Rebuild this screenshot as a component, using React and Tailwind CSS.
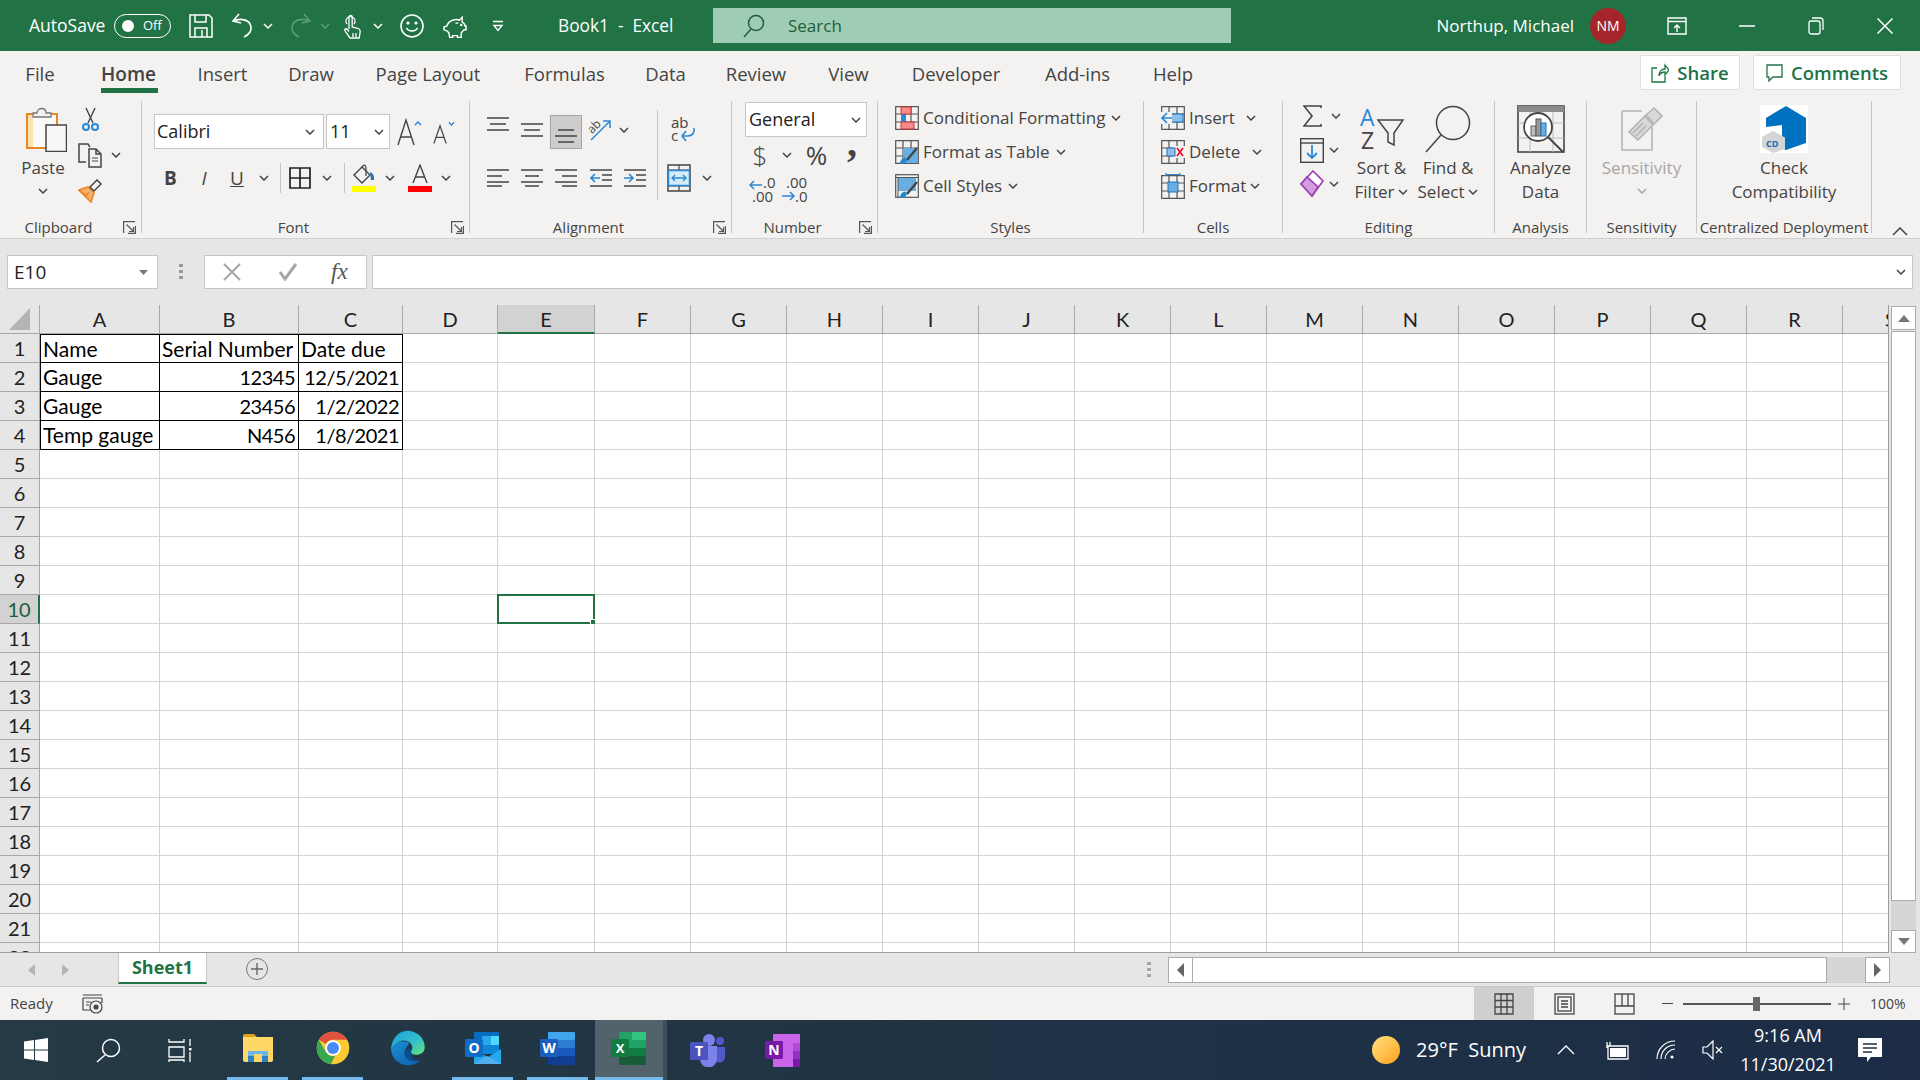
import React from 'react';

const Chev = ({ c = '#444' }) => (
  <svg width="10" height="6" viewBox="0 0 10 6" fill="none" stroke={c} strokeWidth="1.5"><path d="M1 1l4 4 4-4" /></svg>
);

const S = ({ c, children }) => <div className={`flex shrink-0 items-center justify-center ${c}`}>{children}</div>;

const Launcher = () => (
  <svg width="13" height="13" viewBox="0 0 13 13" fill="none" stroke="#555" strokeWidth="1.2"><path d="M.6 12V.6H12M3.5 3.5l7 7M10.5 6v4.5H6M12.4 5v7.4H5" /></svg>
);

const Group = ({ w, label, launcher, children }) => (
  <div className={`flex h-[132px] shrink-0 flex-col border-r border-[#c8c6c4] ${w}`}>
    <div className="h-[117px]">{children}</div>
    <div className="flex h-[15px] items-start">
      <div className="flex-1 text-center text-[15px] leading-[18px] text-[#444]">{label}</div>
      {launcher && <div className="flex h-[18px] w-[24px] items-center justify-center"><Launcher /></div>}
    </div>
  </div>
);

/* title bar icons */
const SaveIcon = () => (
  <svg width="24" height="24" viewBox="0 0 24 24" fill="none" stroke="#fff" strokeWidth="1.5"><path d="M1 1h19l3 3v19H1zM6 1v7h11V1M6 23v-9h12v9M13 16v7" /></svg>
);
const UndoIcon = ({ c = '#fff' }) => (
  <svg width="24" height="25" viewBox="0 0 24 25" fill="none" stroke={c} strokeWidth="1.6"><path d="M8 1L2 8l8 2M2 8c7-3 17-2 18 6 .6 5-3 8-7 10" /></svg>
);
const TouchIcon = () => (
  <svg width="20" height="28" viewBox="0 0 20 28" fill="none" stroke="#fff" strokeWidth="1.3"><path d="M5 12a4.5 4.5 0 1 1 7 0M7 17V5a1.6 1.6 0 0 1 3.2 0v10l6 1.5c1.5.5 2 1.4 2 3l-1 6.5H8l-5-7c-1-2 1-3 2.5-1.5L7 19.5M11 21v4M14 21v4" /></svg>
);
const SmileIcon = () => (
  <svg width="24" height="24" viewBox="0 0 24 24" fill="none" stroke="#fff" strokeWidth="1.6"><circle cx="12" cy="12" r="11" /><path d="M6.5 14c2 4 9 4 11 0" /><circle cx="8" cy="9" r=".8" fill="#fff" /><circle cx="16" cy="9" r=".8" fill="#fff" /></svg>
);
const PigIcon = () => (
  <svg width="25" height="24" viewBox="0 0 25 24" fill="none" stroke="#fff" strokeWidth="1.5"><path d="M1 13l3-1c1-3 3-5 6-6 3-1 5-1 7 0l3-3v5c2 1 3 2 3 4h1v4h-2c-1 1-2 2-3 3v5h-4v-2h-5v2H7l-1-5-2-2-3-1zM13 9h3" /><circle cx="19" cy="11" r=".6" fill="#fff" /></svg>
);
const CustomizeIcon = () => (
  <svg width="12" height="12" viewBox="0 0 12 12" fill="none" stroke="#fff" strokeWidth="1.4"><path d="M1 1.5h10M2 5.5h8l-4 5z" /></svg>
);
const SearchIcon = () => (
  <svg width="22" height="24" viewBox="0 0 22 24" fill="none" stroke="#1f5e3c" strokeWidth="1.5"><circle cx="13" cy="9" r="7.5" /><path d="M8 15L1 23" /></svg>
);
const RedoIcon = () => <div className="-scale-x-100"><UndoIcon c="#5d9a7b" /></div>;

/* clipboard */
const PasteIcon = () => (
  <svg width="41" height="45" viewBox="0 0 41 45">
    <rect x="1" y="7" width="30" height="34" fill="#fde4ae" stroke="#e8862a" strokeWidth="2" />
    <rect x="7" y="8" width="23" height="32" fill="#fafafa" />
    <path d="M7 10V6h4c0-6 9-6 9 0h5v4z" fill="#f3f2f1" stroke="#777" strokeWidth="1.3" />
    <rect x="20" y="18" width="20.5" height="26.5" fill="#f8f8f8" stroke="#444" strokeWidth="1.5" />
  </svg>
);
const ScissorsIcon = () => (
  <svg width="17" height="25" viewBox="0 0 17 25" fill="none"><path d="M4 1l7 15M13 1L6 16" stroke="#444" strokeWidth="1.4" /><circle cx="4" cy="20" r="3" stroke="#2b88d8" strokeWidth="2" /><circle cx="13" cy="20" r="3" stroke="#2b88d8" strokeWidth="2" /></svg>
);
const CopyIcon = () => (
  <svg width="24" height="25" viewBox="0 0 24 25" fill="none" stroke="#444" strokeWidth="1.5"><path d="M8 19H1V1h9l2 3" /><path d="M11 6h7l5 5v13H11zM18 6v5h5" fill="#f3f2f1" /><path d="M14 15h6M14 18h6" strokeWidth="1.2" /></svg>
);
const BrushIcon = () => (
  <svg width="24" height="24" viewBox="0 0 24 24" fill="none"><path d="M1 11l9-3 6 6-3 9z" fill="#f6b26b" stroke="#e8862a" strokeWidth="1.6" /><path d="M7 18l4-5M1 11l8 6" stroke="#e8862a" strokeWidth="1.4" /><path d="M12 8l7-7 4 4-7 7z" fill="#f3f2f1" stroke="#444" strokeWidth="1.5" /></svg>
);

/* font */
const Grow = ({ up }) => (
  <svg width="25" height="28" viewBox="0 0 25 28" fill="none" stroke="#444" strokeWidth="1.4"><path d={up ? 'M1 27L9 2l8 25M4 19h10' : 'M1 27L8 7l7 20M3.5 20h9'} /><path d={up ? 'M18 7l3-3 3 3' : 'M18 3l3 3 3-3'} stroke="#2b88d8" strokeWidth="1.5" /></svg>
);
const BordersIcon = () => (
  <svg width="22" height="22" viewBox="0 0 22 22" fill="none" stroke="#222" strokeWidth="1.7"><path d="M1 1h20v20H1zM11 1v20M1 11h20" /></svg>
);
const FillIcon = () => (
  <svg width="24" height="28" viewBox="0 0 24 28"><path d="M10 3L2 11l8 8 8-8z" fill="none" stroke="#444" strokeWidth="1.4" /><path d="M10 3c2-3 4-2 4 1v8" fill="none" stroke="#444" strokeWidth="1.2" /><path d="M18 8c3 1 4 3 4 8h-3z" fill="#2072b8" /><rect y="22" width="24" height="6" fill="#ffff00" /></svg>
);
const FontColor = () => (
  <svg width="24" height="28" viewBox="0 0 24 28" fill="none"><path d="M5 19L12 1l7 18M7.5 13h9" stroke="#444" strokeWidth="1.4" /><rect y="22" width="24" height="6" fill="#ff0000" /></svg>
);

/* alignment */
const Lines = ({ d }) => (
  <svg width="22" height="18" viewBox="0 0 22 18" fill="none" stroke="#444" strokeWidth="1.6"><path d={d} /></svg>
);
const OrientIcon = () => (
  <svg className="overflow-visible" width="24" height="24" viewBox="0 0 24 24" fill="none"><path d="M3 23L22 4M15 4h7v7" stroke="#2b88d8" strokeWidth="1.5" /><text x="0" y="14" transform="rotate(-45 6 11)" fontSize="12" fill="#444" fontFamily="Open Sans">ab</text></svg>
);
const WrapIcon = () => (
  <svg className="overflow-visible" width="26" height="30" viewBox="0 0 26 30" fill="none"><text x="2" y="13" fontSize="15" fill="#444" fontFamily="Open Sans">ab</text><text x="2" y="26" fontSize="15" fill="#444" fontFamily="Open Sans">c</text><path d="M25 13c1 5-2 8-6 8h-6M17 16l-4 5 4 5" stroke="#2b88d8" strokeWidth="1.6" /></svg>
);
const Indent = ({ out }) => (
  <svg width="22" height="18" viewBox="0 0 22 18" fill="none"><path d="M0 1h22M12 6h10M12 11h10M0 17h22" stroke="#444" strokeWidth="1.6" /><path d={out ? 'M10 9H1M5 5L1 9l4 4' : 'M0 9h9M5 5l4 4-4 4'} stroke="#2b88d8" strokeWidth="1.6" /></svg>
);
const MergeIcon = () => (
  <svg width="24" height="28" viewBox="0 0 24 28" fill="none"><rect x="1" y="1" width="22" height="26" stroke="#444" strokeWidth="1.5" /><path d="M1 6h22M1 22h22M12 22v5M12 1v5" stroke="#444" strokeWidth="1.2" /><rect x="1.5" y="6.5" width="21" height="15" fill="#d6ebf8" stroke="#2b88d8" strokeWidth="1.5" /><path d="M5 14h14M8 11l-3 3 3 3M16 11l3 3-3 3" stroke="#2b88d8" strokeWidth="1.4" /></svg>
);

/* number */
const DecIcon = ({ more }) => (
  <svg className="overflow-visible" width="25" height="26" viewBox="0 0 25 26" fill="none">
    {more ? (
      <>
        <text x="4" y="11" fontSize="15" fill="#444" fontFamily="Open Sans">.00</text>
        <text x="13" y="25" fontSize="15" fill="#444" fontFamily="Open Sans">.0</text>
        <path d="M0 19h12M8 15l4 4-4 4" stroke="#2b88d8" strokeWidth="1.5" />
      </>
    ) : (
      <>
        <text x="14" y="11" fontSize="15" fill="#444" fontFamily="Open Sans">.0</text>
        <text x="3" y="25" fontSize="15" fill="#444" fontFamily="Open Sans">.00</text>
        <path d="M13 8H1M5 4L1 8l4 4" stroke="#2b88d8" strokeWidth="1.5" />
      </>
    )}
  </svg>
);

/* styles + cells */
const TableLines = () => <path d="M.7.7h22.6v22.6H.7zM8 .7v22.6M16 .7v22.6M.7 8h22.6M.7 16h22.6" fill="none" stroke="#555" strokeWidth="1.2" />;
const CondIcon = () => (
  <svg width="24" height="24" viewBox="0 0 24 24"><TableLines /><rect x="6" y="8" width="5" height="8" fill="#2b88d8" /><rect x="6" y="1" width="10" height="7" fill="#f98b8b" stroke="#d13438" /><rect x="6" y="16" width="13" height="7" fill="#f98b8b" stroke="#d13438" /></svg>
);
const Paintbrush = () => (
  <g><path d="M12 20L22 8" stroke="#444" strokeWidth="2.4" /><path d="M5 24c0-4 3-7 6-6 2 2 0 6-6 6z" fill="#1e88d0" /></g>
);
const TableFmtIcon = () => (
  <svg width="24" height="24" viewBox="0 0 24 24"><TableLines /><rect x="8" y="8" width="15" height="15" fill="#69aee3" /><Paintbrush /></svg>
);
const CellStyleIcon = () => (
  <svg width="24" height="24" viewBox="0 0 24 24"><rect x=".7" y=".7" width="22.6" height="22.6" fill="none" stroke="#555" strokeWidth="1.2" /><rect x="3" y="4" width="18" height="13" fill="#69aee3" /><path d="M.7 3.5h22.6M3 3.5v20" stroke="#555" /><Paintbrush /></svg>
);
const InsertIcon = () => (
  <svg width="24" height="24" viewBox="0 0 24 24"><TableLines /><rect x="10" y="8" width="12" height="8" fill="#8cc0ea" stroke="#2072b8" /><rect x="0" y="6" width="11" height="12" fill="#f3f2f1" /><path d="M11 12H1M6 7l-5 5 5 5" fill="none" stroke="#2b88d8" strokeWidth="1.7" /></svg>
);
const DeleteIcon = () => (
  <svg width="24" height="24" viewBox="0 0 24 24"><TableLines /><rect x="12" y="6" width="12" height="12" fill="#f3f2f1" /><rect x="6" y="8" width="8" height="8" fill="#8cc0ea" stroke="#2072b8" /><path d="M16 8l6 8M22 8l-6 8" stroke="#e81123" strokeWidth="1.7" /></svg>
);
const FormatIcon = () => (
  <svg width="24" height="26" viewBox="0 0 24 26"><g transform="translate(0 2)"><TableLines /><rect x="7" y="7" width="10" height="10" fill="#69aee3" stroke="#2072b8" /></g><path d="M5 1.5h14M5 0v3M19 0v3" stroke="#2b88d8" strokeWidth="1.2" fill="none" /></svg>
);

/* editing */
const SigmaIcon = () => (
  <svg width="19" height="22" viewBox="0 0 19 22" fill="none" stroke="#444" strokeWidth="1.6"><path d="M18 3V1H1l8 10-8 10h17v-2" /></svg>
);
const FillDownIcon = () => (
  <svg width="24" height="25" viewBox="0 0 24 25" fill="none"><rect x=".7" y=".7" width="22.6" height="23.6" stroke="#444" strokeWidth="1.4" /><path d="M.7 5h22.6" stroke="#444" strokeWidth="1.4" /><path d="M12 7v13M7 15l5 5 5-5" stroke="#2b88d8" strokeWidth="1.8" /></svg>
);
const EraserIcon = () => (
  <svg width="24" height="28" viewBox="0 0 24 28"><path d="M1 14L13 1l10 10-11 15z" fill="#fff" stroke="#9c3db0" strokeWidth="1.6" /><path d="M1 14l6-7 11 10-6 9z" fill="#d59be0" stroke="#9c3db0" strokeWidth="1.6" /></svg>
);
const SortIcon = () => (
  <svg className="overflow-visible" width="44" height="42" viewBox="0 0 44 42" fill="none"><text x="0" y="18" fontSize="23" fill="#2b88d8" fontFamily="Open Sans">A</text><text x="1" y="41" fontSize="23" fill="#444" fontFamily="Open Sans">Z</text><path d="M18 12h25l-9 13v12l-6-3V25z" stroke="#444" strokeWidth="1.5" /></svg>
);
const FindIcon = () => (
  <svg width="46" height="48" viewBox="0 0 46 48" fill="none" stroke="#444" strokeWidth="1.5"><circle cx="28" cy="18" r="16.5" /><path d="M16 30L1 47" /></svg>
);
const AnalyzeIcon = () => (
  <svg width="48" height="48" viewBox="0 0 48 48" fill="none"><rect x="1" y="1" width="46" height="46" fill="#f3f2f1" stroke="#444" strokeWidth="1.6" /><rect x="1" y="1" width="46" height="6" fill="#8a8a8a" /><path d="M1 18h46M1 33h46M13 7v40M36 7v40" stroke="#bbb" /><circle cx="21" cy="22" r="14" fill="#fff" stroke="#444" strokeWidth="1.8" /><path d="M31 32l15 15" stroke="#444" strokeWidth="2" /><rect x="14" y="21" width="5" height="10" fill="#bbb" stroke="#666" /><rect x="19" y="14" width="5" height="17" fill="#999" stroke="#555" /><rect x="24" y="18" width="5" height="13" fill="#69aee3" stroke="#2072b8" /></svg>
);
const SensitivityIcon = () => (
  <svg width="42" height="44" viewBox="0 0 42 44" fill="none" stroke="#b5b5b5" strokeWidth="1.6"><path d="M1 4h20M1 4v39h30V20" /><path d="M25 8l8-7 8 8-8 8z" fill="#d8d8d8" /><path d="M8 25L24 9l8 9-15 15z" fill="#d8d8d8" /><path d="M12 26l10-10M15 29l10-10" /></svg>
);
const CompatIcon = () => (
  <svg width="48" height="48" viewBox="0 0 48 48"><rect width="48" height="48" fill="#fff" /><path d="M26 1l20 12v25l-20 7-4-2V20L6 22v-9z" fill="#0070c0" /><path d="M13 26l12 6.5V44L13 48 2 42V32z" fill="#d4d4d4" /><text x="6" y="42" fontSize="9" fontWeight="700" fill="#0f6cbd" fontFamily="Open Sans">CD</text></svg>
);

/* taskbar */
const WinIcon = () => (
  <svg width="24" height="24" viewBox="0 0 24 24" fill="#fff"><path d="M0 3.5l10-1.4v9.4H0zM11 2l13-2v11.5H11zM0 12.5h10v9.400L0 20.500zM11 12.500h13V24l-13-2z" /></svg>
);
const TaskSearch = () => (
  <svg width="25" height="25" viewBox="0 0 25 25" fill="none" stroke="#fff" strokeWidth="1.5"><circle cx="15" cy="10" r="8.5" /><path d="M9 17l-8 7" /></svg>
);
const TaskView = () => (
  <svg width="24" height="24" viewBox="0 0 24 24" fill="none" stroke="#fff" strokeWidth="1.3"><path d="M1 1v3h15V1M1 9h15v10H1zM1 24v-2h15v2M22 1v7M22 14v10" /><rect x="21" y="10" width="2.5" height="2.5" fill="#fff" stroke="none" /></svg>
);
const Explorer = () => (
  <svg width="32" height="30" viewBox="0 0 32 30"><path d="M1 3a2 2 0 0 1 2-2h9l3 3H1z" fill="#e0a21b" /><path d="M1 4h30v23a2 2 0 0 1-2 2H3a2 2 0 0 1-2-2z" fill="#ffd766" /><rect x="6" y="18" width="20" height="5" fill="#6cb6ea" /><rect x="6" y="23" width="6" height="6" fill="#2f81c6" /><rect x="20" y="23" width="6" height="6" fill="#2f81c6" /><rect x="12" y="21" width="8" height="8" fill="#ffd766" /></svg>
);
const Chrome = () => (
  <svg width="34" height="34" viewBox="0 0 48 48"><circle cx="24" cy="24" r="23" fill="#fcc934" /><path d="M24 1a23 23 0 0 1 20 11.5H24a11.5 11.5 0 0 0-10 5.800L4 12.500A23 23 0 0 1 24 1z" fill="#e0523f" /><path d="M4 12.500l10 17.300a11.500 11.500 0 0 0 13 5.300L21 46.800A23 23 0 0 1 4 12.500z" fill="#36a852" /><circle cx="24" cy="24" r="11" fill="#fff" /><circle cx="24" cy="24" r="8.500" fill="#4a8af4" /></svg>
);
const Edge = () => (
  <svg width="37" height="36" viewBox="0 0 48 48">
    <defs>
      <linearGradient id="edgeTop" x1="0" y1="0" x2="1" y2="1"><stop offset="0" stopColor="#1a9fe0" /><stop offset=".6" stopColor="#35c1c8" /><stop offset="1" stopColor="#66e86e" /></linearGradient>
      <linearGradient id="edgeLow" x1="0" y1="0" x2="1" y2="1"><stop offset="0" stopColor="#1b8fd6" /><stop offset="1" stopColor="#0c5ea8" /></linearGradient>
    </defs>
    <path d="M2 24C2 37 12 47 25 47c6 0 12-2 16-7-5 2-10 2-14 0-6-3-8-9-6-14 2-5 8-8 3-10C14 13 4 16 2 24z" fill="url(#edgeLow)" />
    <path d="M21 26c-3 7 1 14 6 14 6 2 11 2 14 0-6 1-10-1-11-5 0-3 0-6-2-9z" fill="#0a4d8c" />
    <path d="M24 1C36 1 47 10 47 23c0 7-6 10-11 10-5 0-8-2-7-5 2-3 2-6 0-9-4-6-12-6-18-3-5 3-8 6-9 9C3 13 11 1 24 1z" fill="url(#edgeTop)" />
  </svg>
);
const Outlook = () => (
  <svg width="36" height="33" viewBox="0 0 36 33"><rect x="9" y="0" width="25" height="14" fill="#0a6cc0" /><rect x="17" y="4" width="9" height="9" fill="#28a8ea" /><rect x="26" y="4" width="8" height="9" fill="#50d9ff" /><rect x="9" y="13" width="8" height="9" fill="#0a6cc0" /><rect x="17" y="13" width="17" height="9" fill="#0f86d8" /><path d="M9 18l14 7 13-8v15H9z" fill="#28a8ea" /><path d="M9 32l13-8 14 8z" fill="#50b0f0" /><rect x="0" y="7" width="18" height="18" rx="1" fill="#0f6cc4" /><text x="9" y="21" textAnchor="middle" fontSize="14" fontWeight="700" fill="#fff" fontFamily="Open Sans">O</text></svg>
);
const Word = () => (
  <svg width="36" height="33" viewBox="0 0 36 33"><rect x="8" y="0" width="27" height="8" rx="1" fill="#41a5ee" /><rect x="8" y="8" width="27" height="8" fill="#2b7cd3" /><rect x="8" y="16" width="27" height="8" fill="#185abd" /><rect x="8" y="24" width="27" height="9" rx="1" fill="#103f91" /><rect x="0" y="7" width="18" height="18" rx="1" fill="#1b5ebe" /><text x="9" y="21" textAnchor="middle" fontSize="14" fontWeight="700" fill="#fff" fontFamily="Open Sans">W</text></svg>
);
const Excel = () => (
  <svg width="36" height="33" viewBox="0 0 36 33"><rect x="8" y="0" width="27" height="8" rx="1" fill="#21a366" /><rect x="21" y="0" width="14" height="8" fill="#33c481" /><rect x="8" y="8" width="27" height="8" fill="#21a366" /><rect x="8" y="16" width="27" height="8" fill="#107c41" /><rect x="8" y="24" width="27" height="9" rx="1" fill="#185c37" /><rect x="0" y="7" width="18" height="18" rx="1" fill="#107c41" /><text x="9" y="21" textAnchor="middle" fontSize="13" fontWeight="700" fill="#fff" fontFamily="Open Sans">X</text></svg>
);
const Teams = () => (
  <svg width="36" height="33" viewBox="0 0 36 33"><circle cx="30" cy="7" r="4" fill="#5059c9" /><path d="M24 13h11v10a5 5 0 0 1-11 0z" fill="#5059c9" /><circle cx="19" cy="6" r="6" fill="#7b83eb" /><path d="M10 12h17v13a8.500 8.500 0 0 1-17 0z" fill="#7b83eb" /><rect x="0" y="8" width="18" height="18" rx="1" fill="#4b53bc" /><text x="9" y="22" textAnchor="middle" fontSize="14" fontWeight="700" fill="#fff" fontFamily="Open Sans">T</text></svg>
);
const OneNote = () => (
  <svg width="36" height="33" viewBox="0 0 36 33"><rect x="8" y="0" width="27" height="33" rx="1" fill="#ca64ea" /><rect x="28" y="9" width="7" height="8" fill="#ae4bd5" /><rect x="28" y="17" width="7" height="8" fill="#9332bf" /><rect x="28" y="25" width="7" height="8" fill="#7719aa" /><rect x="0" y="7" width="18" height="18" rx="1" fill="#7719aa" /><text x="9" y="21" textAnchor="middle" fontSize="14" fontWeight="700" fill="#fff" fontFamily="Open Sans">N</text></svg>
);

const tabs = [
  ['File', 'w-[80px]'], ['Home', 'w-[97px]'], ['Insert', 'w-[91px]'], ['Draw', 'w-[86px]'],
  ['Page Layout', 'w-[148px]'], ['Formulas', 'w-[125px]'], ['Data', 'w-[77px]'], ['Review', 'w-[104px]'],
  ['View', 'w-[81px]'], ['Developer', 'w-[134px]'], ['Add-ins', 'w-[109px]'], ['Help', 'w-[82px]'],
];

const columns = ['A', 'B', 'C', 'D', 'E', 'F', 'G', 'H', 'I', 'J', 'K', 'L', 'M', 'N', 'O', 'P', 'Q', 'R', 'S'];
const rows = Array.from({ length: 22 }, (_, i) => i + 1);
const sheet = {
  A1: 'Name', B1: 'Serial Number', C1: 'Date due',
  A2: 'Gauge', B2: '12345', C2: '12/5/2021',
  A3: 'Gauge', B3: '23456', C3: '1/2/2022',
  A4: 'Temp gauge', B4: 'N456', C4: '1/8/2021',
};

const Cell = ({ col, row }) => {
  const inTable = row <= 4 && ['A', 'B', 'C'].includes(col);
  const right = row > 1 && (col === 'B' || col === 'C');
  return (
    <div
      className={`relative flex items-center whitespace-nowrap border-r border-b text-black ${
        inTable ? 'border-black' : 'border-[#d4d4d4]'
      } ${col === 'A' && inTable ? 'border-l' : ''} ${row === 1 && inTable ? 'border-t' : ''} ${
        right ? 'justify-end pr-[3px] text-[20px] tracking-[-0.5px]' : 'pl-[2px] text-[21px]'
      }`}
    >
      {sheet[col + row]}
      {col === 'E' && row === 10 && (
        <div className="absolute -top-px -left-px -right-px -bottom-px border-2 border-[#217346]">
          <div className="absolute -right-[3px] -bottom-[3px] h-[6px] w-[6px] border border-white bg-[#217346]" />
        </div>
      )}
    </div>
  );
};

const Spreadsheet = () => (
  <div className="h-[648px] w-[1889px] overflow-hidden border-r border-b border-[#9d9d9d] bg-white font-['Lato',sans-serif]">
    <div className="grid grid-cols-[40px_120px_139px_104px_95px_97px_repeat(14,96px)] grid-rows-[29px_repeat(22,29px)]">
      <div className="flex items-center justify-center border-r border-b border-[#a8a8a8] bg-[#e6e6e6]">
        <svg width="21" height="22" viewBox="0 0 21 22"><path d="M21 0v22H0z" fill="#b4b4b4" /></svg>
      </div>
      {columns.map((c) => (
        <div
          key={c}
          className={`flex items-center justify-center border-r text-[20px] text-[#222] ${
            c === 'E' ? 'border-b-2 border-r-[#a8a8a8] border-b-[#217346] bg-[#d2d2d2] text-[#1b5e3a]' : 'border-b border-[#a8a8a8] bg-[#e6e6e6]'
          }`}
        >
          {c}
        </div>
      ))}
      {rows.map((r) => (
        <React.Fragment key={r}>
          <div
            className={`flex items-center justify-center border-b text-[20px] ${
              r === 10
                ? 'border-r-2 border-r-[#217346] border-b-[#a8a8a8] bg-[#d2d2d2] text-[#1b5e3a]'
                : 'border-r border-[#a8a8a8] bg-[#e6e6e6] text-[#222]'
            }`}
          >
            {r}
          </div>
          {columns.map((c) => <Cell key={c} col={c} row={r} />)}
        </React.Fragment>
      ))}
    </div>
  </div>
);

const App = () => (
  <div className="flex h-[1080px] w-[1920px] flex-col overflow-hidden bg-[#e6e6e6] font-['Open_Sans',sans-serif] text-[17px]">
    {/* Title bar */}
    <div className="flex h-[51px] shrink-0 items-center bg-[#217346] pl-[29px] pr-[27px] text-white">
      <span className="w-[76px] whitespace-nowrap text-[17.5px]">AutoSave</span>
      <div className="ml-[9px] flex h-[24px] w-[57px] items-center rounded-full border border-white pl-[7px]">
        <div className="h-[12px] w-[12px] rounded-full bg-white" />
        <span className="ml-[9px] text-[13px]">Off</span>
      </div>
      <S c="ml-[15px] w-[30px]"><SaveIcon /></S>
      <S c="ml-[13px] w-[28px]"><UndoIcon /></S>
      <S c="ml-[4px] w-[14px]"><Chev c="#fff" /></S>
      <S c="ml-[14px] w-[22px]"><RedoIcon /></S>
      <S c="ml-[7px] w-[14px]"><Chev c="#5d9a7b" /></S>
      <S c="ml-[10px] w-[20px]"><TouchIcon /></S>
      <S c="ml-[9px] w-[14px]"><Chev c="#fff" /></S>
      <S c="ml-[15px] w-[24px]"><SmileIcon /></S>
      <S c="ml-[19px] w-[24px]"><PigIcon /></S>
      <S c="ml-[24px] w-[14px]"><CustomizeIcon /></S>
      <span className="ml-[53px] w-[155px] whitespace-pre text-[17.3px]">Book1  -  Excel</span>
      <div className="flex h-[35px] w-[518px] items-center bg-[#9fcdb3] pl-[30px] text-[#1f5e3c]">
        <SearchIcon />
        <span className="ml-[23px]">Search</span>
      </div>
      <span className="ml-auto whitespace-nowrap">Northup, Michael</span>
      <div className="ml-[16px] flex h-[36px] w-[36px] items-center justify-center rounded-full bg-[#a4262c] text-[14px]">NM</div>
      <S c="ml-[41px] w-[20px]">
        <svg width="20" height="18" viewBox="0 0 20 18" fill="none" stroke="#fff" strokeWidth="1.4"><path d="M1 1h18v16H1zM1 4.500h18M10 15V8M7 11l3-3 3 3" /></svg>
      </S>
      <S c="ml-[52px] w-[16px]">
        <svg width="16" height="2" viewBox="0 0 16 2" stroke="#fff" strokeWidth="1.5"><path d="M0 1h16" /></svg>
      </S>
      <S c="ml-[53px] w-[16px]">
        <svg width="16" height="18" viewBox="0 0 16 18" fill="none" stroke="#fff" strokeWidth="1.3"><rect x="1" y="4" width="11" height="13" rx="2" /><path d="M4 1h8a3 3 0 0 1 3 3v9" /></svg>
      </S>
      <S c="ml-[53px] w-[16px]">
        <svg width="16" height="16" viewBox="0 0 16 16" stroke="#fff" strokeWidth="1.5"><path d="M.5.5l15 15M15.500.5l-15 15" /></svg>
      </S>
    </div>

    {/* Ribbon tabs */}
    <div className="flex h-[44px] shrink-0 bg-[#f3f2f1] text-[18.5px] text-[#444]">
      {tabs.map(([name, w]) => (
        <div key={name} className={`relative flex shrink-0 items-center justify-center pt-[2px] ${w} ${name === 'Home' ? 'text-[19px] font-semibold' : ''}`}>
          {name}
          {name === 'Home' && <div className="absolute bottom-[2px] left-[21px] h-[5px] w-[57px] bg-[#217346]" />}
        </div>
      ))}
      <div className="ml-auto flex items-start gap-[13px] pr-[19px] pt-[4px] text-[18.5px] font-semibold text-[#217346]">
        <div className="flex h-[35px] w-[100px] items-center justify-center gap-[8px] rounded-[2px] border border-[#e1dfdd] bg-white pt-px">
          <svg width="18" height="20" viewBox="0 0 18 20" fill="none" stroke="#217346" strokeWidth="1.3"><path d="M6 5H1v14h13v-6M8 13c0-5 3-7 6-7V2l4 5-4 5V9c-3 0-5 1-6 4z" /></svg>
          Share
        </div>
        <div className="flex h-[35px] w-[148px] items-center justify-center gap-[8px] rounded-[2px] border border-[#e1dfdd] bg-white pt-px">
          <svg width="17" height="19" viewBox="0 0 17 19" fill="none" stroke="#217346" strokeWidth="1.3"><path d="M1 1h15v12H7l-4 4v-4H1z" /></svg>
          Comments
        </div>
      </div>
    </div>

    {/* Ribbon */}
    <div className="flex h-[144px] shrink-0 border-b border-[#d2d0ce] bg-[#f3f2f1] pt-[6px] text-[#444]">
      <Group w="w-[142px]" label="Clipboard" launcher>
        <div className="flex">
          <div className="flex w-[78px] flex-col items-center pl-[8px] pt-[6px]">
            <div className="ml-[7px]"><PasteIcon /></div>
            <span className="mt-[4px] leading-[24px]">Paste</span>
            <div className="mt-[8px]"><Chev /></div>
          </div>
          <div className="flex flex-col">
            <S c="h-[36px] w-[24px]"><ScissorsIcon /></S>
            <div className="flex h-[36px] items-center">
              <S c="w-[24px]"><CopyIcon /></S>
              <div className="ml-[9px]"><Chev /></div>
            </div>
            <S c="h-[36px] w-[24px]"><BrushIcon /></S>
          </div>
        </div>
      </Group>

      <Group w="w-[328px]" label="Font" launcher>
        <div className="pl-[12px] pt-[13px]">
          <div className="flex items-center">
            <div className="flex h-[35px] w-[170px] items-center justify-between border border-[#c8c6c4] bg-white pl-[2px] pr-[8px] text-[18px] text-[#222]">Calibri<Chev /></div>
            <div className="ml-[2px] flex h-[35px] w-[64px] items-center justify-between border border-[#c8c6c4] bg-white pl-[3px] pr-[5px] text-[18px] text-[#222]">11<Chev /></div>
            <S c="ml-[7px] w-[25px]"><Grow up /></S>
            <S c="ml-[11px] w-[22px]"><Grow /></S>
          </div>
          <div className="mt-[12px] flex h-[34px] items-center">
            <S c="w-[33px] text-[19px] font-bold">B</S>
            <S c="w-[34px] text-[19px] italic">I</S>
            <S c="w-[32px] text-[19px] underline">U</S>
            <S c="w-[22px]"><Chev /></S>
            <div className="ml-[5px] h-[30px] w-px bg-[#c8c6c4]" />
            <S c="w-[38px]"><BordersIcon /></S>
            <S c="w-[16px]"><Chev /></S>
            <div className="ml-[9px] h-[30px] w-px bg-[#c8c6c4]" />
            <S c="w-[38px]"><FillIcon /></S>
            <S c="w-[14px]"><Chev /></S>
            <S c="ml-[3px] w-[40px]"><FontColor /></S>
            <S c="w-[12px]"><Chev /></S>
          </div>
        </div>
      </Group>

      <Group w="w-[262px]" label="Alignment" launcher>
        <div className="flex">
          <div className="w-[187px] pl-[11px] pt-[14px]">
            <div className="flex h-[34px]">
              <S c="w-[34px] pb-[12px]"><Lines d="M0 1h22M3 7h16M0 13h22" /></S>
              <S c="w-[34px] pb-[2px]"><Lines d="M0 2h22M3 8h16M0 14h22" /></S>
              <S c="ml-px w-[32px] border border-[#a8a6a4] bg-[#cfcdcc] pt-[8px]"><Lines d="M3 3h16M0 9h22M3 15h16" /></S>
              <S c="ml-px w-[34px] pb-[6px]"><OrientIcon /></S>
              <S c="w-[14px] pb-[4px]"><Chev /></S>
            </div>
            <div className="mt-[12px] flex h-[34px]">
              <S c="w-[34px]"><Lines d="M0 1h22M0 7h15M0 13h22M0 17h15" /></S>
              <S c="w-[34px]"><Lines d="M0 1h22M4 7h14M0 13h22M4 17h14" /></S>
              <S c="w-[34px]"><Lines d="M0 1h22M7 7h15M0 13h22M7 17h15" /></S>
              <S c="ml-px w-[34px]"><Indent out /></S>
              <S c="w-[34px]"><Indent /></S>
            </div>
          </div>
          <div className="mt-[9px] h-[90px] w-px bg-[#c8c6c4]" />
          <div className="pt-[7px]">
            <S c="h-[43px] w-[48px]"><WrapIcon /></S>
            <div className="mt-[10px] flex h-[34px] items-center pl-[7px]">
              <S c="w-[28px]"><MergeIcon /></S>
              <S c="ml-[7px] w-[14px]"><Chev /></S>
            </div>
          </div>
        </div>
      </Group>

      <Group w="w-[146px]" label="Number" launcher>
        <div className="pl-[13px] pt-px">
          <div className="flex h-[35px] w-[122px] items-center justify-between border border-[#c8c6c4] bg-white pl-[3px] pr-[5px] text-[18px] text-[#222]">General<Chev /></div>
          <div className="mt-[2px] flex h-[32px] items-center">
            <S c="w-[30px] text-[26px] font-light">$</S>
            <S c="w-[24px]"><Chev /></S>
            <S c="w-[35px] text-[26px]">%</S>
            <S c="w-[36px] font-['Liberation_Serif',serif] text-[40px] font-bold leading-[32px]"><span className="-translate-y-[12px]">,</span></S>
          </div>
          <div className="mt-[4px] flex h-[30px] items-center">
            <S c="w-[32px]"><DecIcon /></S>
            <S c="w-[34px]"><DecIcon more /></S>
          </div>
        </div>
      </Group>

      <Group w="w-[266px]" label="Styles">
        <div className="pl-[17px]">
          {[
            [<CondIcon key="i" />, 'Conditional Formatting'],
            [<TableFmtIcon key="i" />, 'Format as Table'],
            [<CellStyleIcon key="i" />, 'Cell Styles'],
          ].map(([icon, text]) => (
            <div key={text} className="flex h-[34px] items-center">
              {icon}
              <span className="ml-[4px] mr-[6px] whitespace-nowrap">{text}</span>
              <Chev />
            </div>
          ))}
        </div>
      </Group>

      <Group w="w-[139px]" label="Cells">
        <div className="pl-[17px]">
          <div className="flex h-[34px] items-center"><InsertIcon /><span className="ml-[4px] w-[57px]">Insert</span><Chev /></div>
          <div className="flex h-[34px] items-center"><DeleteIcon /><span className="ml-[4px] w-[63px]">Delete</span><Chev /></div>
          <div className="flex h-[34px] items-center"><FormatIcon /><span className="ml-[4px] w-[61px]">Format</span><Chev /></div>
        </div>
      </Group>

      <Group w="w-[212px]" label="Editing">
        <div className="flex">
          <div className="-mt-[2px] flex w-[62px] flex-col pl-[14px]">
            <div className="flex h-[34px] items-center"><S c="w-[30px]"><SigmaIcon /></S><S c="w-[18px]"><Chev /></S></div>
            <div className="flex h-[34px] items-center"><S c="w-[30px]"><FillDownIcon /></S><S c="w-[14px]"><Chev /></S></div>
            <div className="flex h-[34px] items-center"><S c="w-[30px]"><EraserIcon /></S><S c="w-[14px]"><Chev /></S></div>
          </div>
          <div className="flex w-[73px] flex-col items-center pt-[3px]">
            <S c="h-[50px]"><SortIcon /></S>
            <div className="mt-[2px] text-center leading-[24px]">Sort &amp;<div className="flex items-center gap-[4px]">Filter<Chev /></div></div>
          </div>
          <div className="flex w-[60px] flex-col items-center pt-[3px]">
            <S c="h-[50px]"><FindIcon /></S>
            <div className="mt-[2px] text-center leading-[24px]">Find &amp;<div className="flex items-center gap-[4px]">Select<Chev /></div></div>
          </div>
        </div>
      </Group>

      <Group w="w-[92px]" label="Analysis">
        <div className="flex flex-col items-center pt-[3px]">
          <S c="h-[50px]"><AnalyzeIcon /></S>
          <div className="mt-[2px] text-center leading-[24px]">Analyze<br />Data</div>
        </div>
      </Group>

      <Group w="w-[110px]" label="Sensitivity">
        <div className="flex flex-col items-center pt-[3px]">
          <S c="h-[50px]"><SensitivityIcon /></S>
          <div className="mt-[2px] text-center leading-[24px] text-[#a6a6a6]">Sensitivity</div>
          <div className="mt-[8px]"><Chev c="#a6a6a6" /></div>
        </div>
      </Group>

      <Group w="w-[175px]" label="Centralized Deployment">
        <div className="flex flex-col items-center pt-[3px]">
          <S c="h-[50px]"><CompatIcon /></S>
          <div className="mt-[2px] text-center leading-[24px]">Check<br />Compatibility</div>
        </div>
      </Group>

      <div className="flex flex-1 items-end justify-center pb-[2px] pl-[8px]">
        <svg width="16" height="9" viewBox="0 0 16 9" fill="none" stroke="#444" strokeWidth="1.5"><path d="M1 8l7-7 7 7" /></svg>
      </div>
    </div>

    {/* Formula bar */}
    <div className="flex h-[66px] shrink-0 items-start pl-[7px] pr-[7px] pt-[16px]">
      <div className="flex h-[34px] w-[151px] items-center justify-between border border-[#c8c6c4] bg-white pl-[6px] pr-[9px] text-[19px] text-[#222]">
        E10
        <svg width="9" height="5" viewBox="0 0 9 5" fill="#777"><path d="M0 0h9L4.500 5z" /></svg>
      </div>
      <S c="h-[34px] w-[46px]">
        <svg width="4" height="16" viewBox="0 0 4 16" fill="#999"><rect y="0" width="4" height="3" /><rect y="6" width="4" height="3" /><rect y="12" width="4" height="3" /></svg>
      </S>
      <div className="flex h-[34px] w-[163px] items-center border border-[#c8c6c4] bg-white pl-[18px]">
        <svg width="18" height="18" viewBox="0 0 18 18" stroke="#a6a6a6" strokeWidth="2"><path d="M1 1l16 16M17 1L1 17" /></svg>
        <svg className="ml-[37px]" width="20" height="18" viewBox="0 0 20 18" fill="none" stroke="#a6a6a6" strokeWidth="3"><path d="M2 9l5 7L18 1" /></svg>
        <span className="ml-[33px] font-['Liberation_Serif',serif] text-[23px] italic text-[#555]">fx</span>
      </div>
      <div className="ml-[5px] flex h-[34px] flex-1 items-center justify-end border border-[#c8c6c4] bg-white pr-[6px]"><Chev /></div>
    </div>

    {/* Grid and vertical scrollbar */}
    <div className="flex h-[648px] shrink-0">
      <Spreadsheet />
      <div className="ml-[2px] flex w-[25px] flex-col pt-px">
        <div className="flex h-[24px] items-center justify-center border border-[#ababab] bg-white">
          <svg width="12" height="7" viewBox="0 0 12 7" fill="#777"><path d="M6 0l6 7H0z" /></svg>
        </div>
        <div className="mt-px h-[570px] border border-[#ababab] bg-white" />
        <div className="h-[29px] bg-[#d6d6d6]" />
        <div className="flex h-[23px] items-center justify-center border border-[#ababab] bg-white">
          <svg width="12" height="7" viewBox="0 0 12 7" fill="#777"><path d="M6 7l6-7H0z" /></svg>
        </div>
      </div>
    </div>

    {/* Sheet tabs */}
    <div className="flex h-[34px] shrink-0 items-start border-b border-[#c8c8c8] pr-[30px]">
      <div className="flex h-[33px] w-[118px] items-center pl-[28px]">
        <svg width="7" height="12" viewBox="0 0 7 12" fill="#b5b5b5"><path d="M7 0v12L0 6z" /></svg>
        <svg className="ml-[27px]" width="7" height="12" viewBox="0 0 7 12" fill="#b5b5b5"><path d="M0 0v12l7-6z" /></svg>
      </div>
      <div className="flex h-[31px] w-[89px] items-center justify-center border-x border-b-2 border-x-[#c8c8c8] border-b-[#217346] bg-white text-[18px] font-bold text-[#217346]">Sheet1</div>
      <div className="ml-[39px] mt-[5px] flex h-[22px] w-[22px] items-center justify-center rounded-full border border-[#777]">
        <svg width="12" height="12" viewBox="0 0 12 12" stroke="#666" strokeWidth="1.4"><path d="M6 0v12M0 6h12" /></svg>
      </div>
      <div className="ml-auto flex h-[33px] items-center">
        <svg width="4" height="16" viewBox="0 0 4 16" fill="#a6a6a6"><rect width="4" height="3" /><rect y="6" width="4" height="3" /><rect y="12" width="4" height="3" /></svg>
        <div className="ml-[17px] flex h-[26px] w-[722px]">
          <div className="flex w-[25px] items-center justify-center border border-[#ababab] bg-white">
            <svg width="7" height="14" viewBox="0 0 7 14" fill="#666"><path d="M7 0v14L0 7z" /></svg>
          </div>
          <div className="w-[634px] border-y border-r border-[#ababab] bg-white" />
          <div className="flex-1 bg-[#d6d6d6]" />
          <div className="flex w-[25px] items-center justify-center border border-[#ababab] bg-white">
            <svg width="7" height="14" viewBox="0 0 7 14" fill="#666"><path d="M0 0v14l7-7z" /></svg>
          </div>
        </div>
      </div>
    </div>

    {/* Status bar */}
    <div className="flex h-[33px] shrink-0 items-center bg-[#f3f2f1] pl-[10px] text-[15px] text-[#444]">
      <span className="w-[72px]">Ready</span>
      <svg width="21" height="20" viewBox="0 0 21 20" fill="none" stroke="#444" strokeWidth="1.2"><path d="M1 1h19M1 4h19M1 4v12h7M20 4v5M4 8h5M4 11h3" /><circle cx="14" cy="13" r="6" /><circle cx="14" cy="13" r="2" fill="#444" /></svg>
      <div className="ml-auto flex h-full items-center">
        <S c="h-full w-[60px] bg-[#d0cfce]">
          <svg width="20" height="22" viewBox="0 0 20 22" fill="none" stroke="#444" strokeWidth="1.3"><path d="M1 1h18v20H1zM7 1v20M13 1v20M1 7.500h18M1 14h18" /></svg>
        </S>
        <S c="w-[60px]">
          <svg width="21" height="22" viewBox="0 0 21 22" fill="none" stroke="#444" strokeWidth="1.3"><rect x="1" y="1" width="19" height="20" /><rect x="4" y="4" width="13" height="14" /><path d="M7 8h7M7 11h7M7 14h7" strokeWidth="1.5" /></svg>
        </S>
        <S c="w-[60px]">
          <svg width="21" height="22" viewBox="0 0 21 22" fill="none" stroke="#444" strokeWidth="1.3"><rect x="1" y="1" width="19" height="20" /><path d="M8 1v12M14 1v12M1 13h19" /></svg>
        </S>
        <span className="ml-[8px] h-px w-[11px] bg-[#444]" />
        <div className="relative ml-[10px] h-[2px] w-[148px] bg-[#555]">
          <div className="absolute -top-[6px] left-[70px] h-[14px] w-[7px] bg-[#666]" />
        </div>
        <svg className="ml-[7px]" width="12" height="12" viewBox="0 0 12 12" stroke="#444" strokeWidth="1"><path d="M6 0v12M0 6h12" /></svg>
        <span className="ml-[20px] w-[50px] text-[14px]">100%</span>
      </div>
    </div>

    {/* Taskbar */}
    <div className="flex h-[60px] shrink-0 bg-linear-to-r from-[#243a44] to-[#1c2c46] text-white">
      <S c="w-[72px]"><WinIcon /></S>
      <S c="w-[72px]"><TaskSearch /></S>
      <S c="w-[72px]"><TaskView /></S>
      <div className="w-[4px] shrink-0" />
      {[
        [<Explorer key="i" />, true],
        [<Chrome key="i" />, true],
        [<Edge key="i" />, false],
        [<Outlook key="i" />, true],
        [<Word key="i" />, true],
      ].map(([icon, open], i) => (
        <div key={i} className="flex w-[75px] shrink-0 flex-col items-center">
          <div className="flex flex-1 items-center pb-[1px]">{icon}</div>
          <div className={`h-[3px] w-[61px] ${open ? 'bg-[#76b9ed]' : ''}`} />
        </div>
      ))}
      <div className="flex w-[72px] shrink-0 flex-col items-center border-r-4 border-r-[#3f4f57] bg-[#52636b]">
        <div className="flex flex-1 items-center"><Excel /></div>
        <div className="h-[3px] w-full bg-[#76b9ed]" />
      </div>
      <S c="ml-[3px] w-[75px]"><Teams /></S>
      <S c="w-[75px]"><OneNote /></S>
      <div className="ml-auto flex items-center">
        <div className="h-[28px] w-[28px] rounded-full bg-linear-to-br from-[#ffe27a] to-[#ff9f00]" />
        <span className="ml-[16px] whitespace-pre text-[20px]">29°F  Sunny</span>
        <svg className="ml-[31px]" width="18" height="10" viewBox="0 0 18 10" fill="none" stroke="#fff" strokeWidth="1.3"><path d="M1 9l8-8 8 8" /></svg>
        <svg className="ml-[30px]" width="24" height="22" viewBox="0 0 24 22" fill="none" stroke="#fff" strokeWidth="1.3"><path d="M3 7h20v13H3zM3 8H1M2 7V3M5 7V3" /><rect x="5" y="9" width="16" height="9" fill="#fff" stroke="none" /></svg>
        <svg className="ml-[27px]" width="20" height="20" viewBox="0 0 20 20" fill="none" stroke="#fff" strokeWidth="1.1"><path d="M1 19C1 9 9 1 19 1M5 19C5 11 11 5 19 5M9 19c0-5 5-10 10-10" /><circle cx="16" cy="17" r="1.6" fill="#fff" stroke="none" /></svg>
        <svg className="ml-[26px]" width="21" height="20" viewBox="0 0 21 20" fill="none" stroke="#fff" strokeWidth="1.2"><path d="M1 7v6h4l6 6V1L5 7zM14 7l6 6M20 7l-6 6" /></svg>
        <div className="ml-[6px] w-[118px] text-center text-[18px] leading-[29px]">9:16 AM<br />11/30/2021</div>
        <svg className="ml-[10px]" width="26" height="26" viewBox="0 0 26 26"><path d="M1 1h24v19H14l-4 5v-5H1z" fill="#fff" /><path d="M6 7h14M6 11h14M6 15h9" stroke="#1c2c46" strokeWidth="1.4" /></svg>
        <div className="ml-[31px] h-full w-[6px] bg-[#1c2c46]" />
      </div>
    </div>
  </div>
);

export default App;
